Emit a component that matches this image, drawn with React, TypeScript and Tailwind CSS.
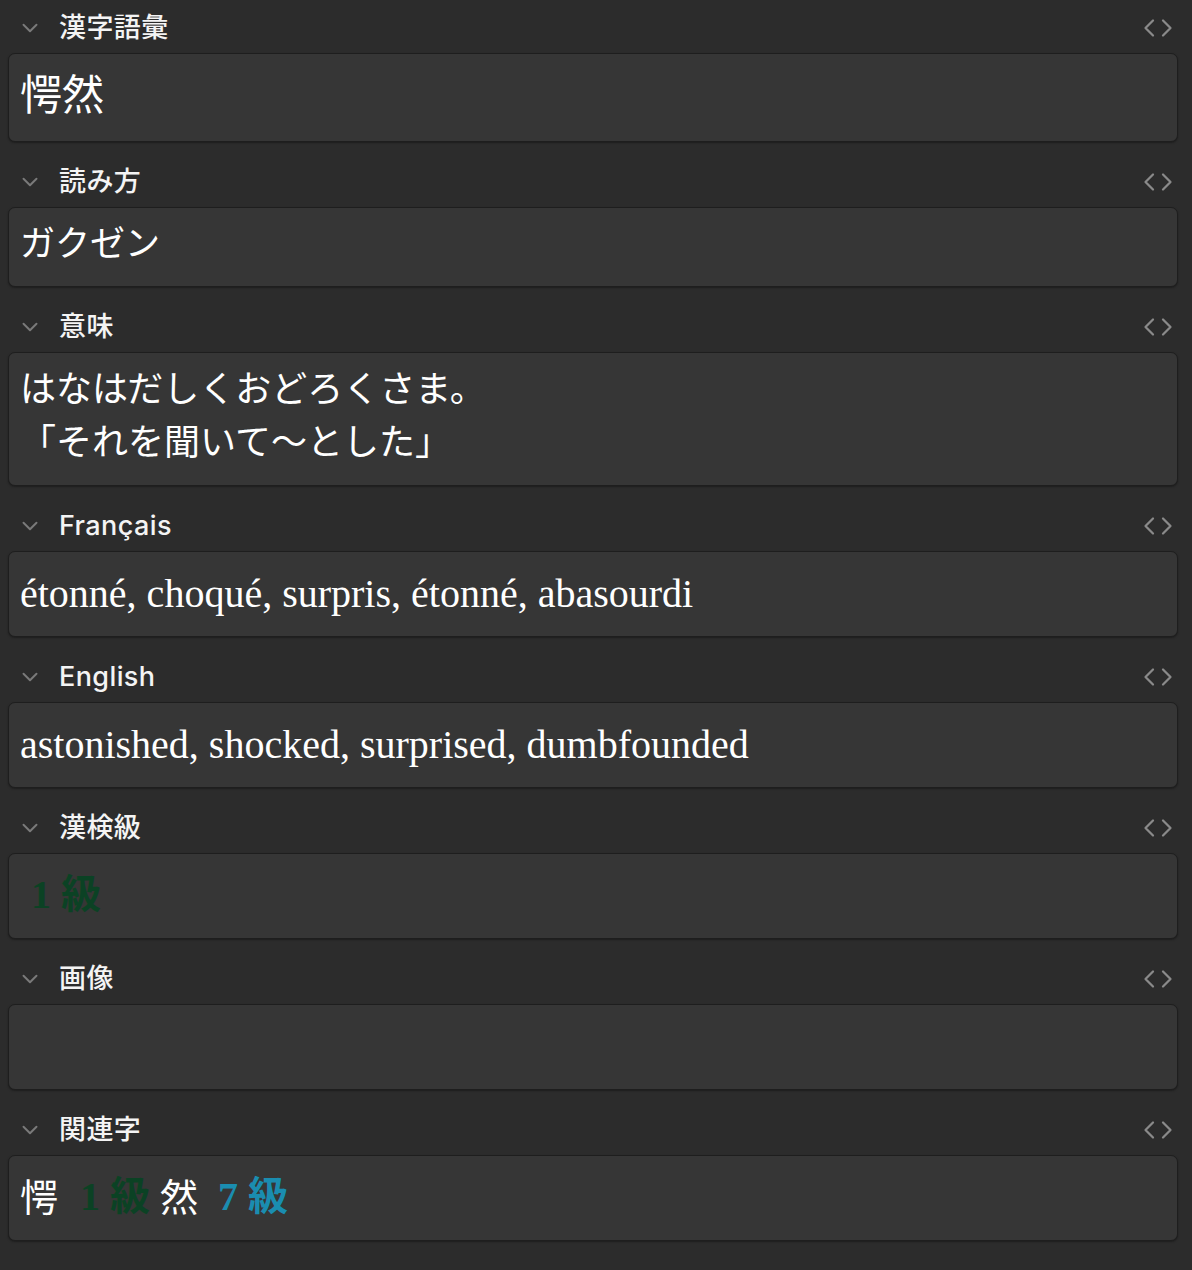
import React from "react";
import { ChevronDown, Code } from "lucide-react";

const sans = "font-['Inter','Noto_Sans_CJK_JP',sans-serif]";
const serif = "font-['Liberation_Serif','Noto_Sans_CJK_JP',serif]";

interface FieldProps {
    label: string;
    boxClass: string;
    children?: React.ReactNode;
}

const Field: React.FC<FieldProps> = ({ label, boxClass, children }) => (
    <div className="mb-[13px]">
        {/* Label row */}
        <div className="flex h-[52px] items-center pt-[2px]">
            <div className="flex w-[59px] justify-center">
                <ChevronDown size={26} strokeWidth={1.8} className="text-[#7a7a7a]" />
            </div>
            <span className={`${sans} flex-1 text-[27px] font-medium tracking-[0.4px] text-[#f4f4f4]`}>{label}</span>
            <Code size={30} strokeWidth={1.8} className="mr-[19px] text-[#8a8a8a]" />
        </div>

        {/* Editable box */}
        <div
            className={`ml-[8px] mr-[14px] rounded-[7px] border border-[#1e1e1e] bg-[#363636] px-[11px] text-white shadow-[0_1px_2px_rgba(0,0,0,0.35)] ${boxClass}`}
        >
            {children}
        </div>
    </div>
);

export default function App() {
    return (
        <div className="min-h-[1270px] w-[1192px] bg-[#2c2c2c] pt-[1px]">
            <Field label="漢字語彙" boxClass={`${sans} h-[89px] pt-[13px] text-[42px] leading-[55px]`}>
                愕然
            </Field>

            <Field label="読み方" boxClass={`${serif} h-[80px] pt-[12px] text-[35px] leading-[50px]`}>
                ガクゼン
            </Field>

            <Field label="意味" boxClass={`${serif} h-[134px] pt-[11px] text-[36px] leading-[53px]`}>
                はなはだしくおどろくさま。
                <br />
                「それを聞いて〜とした」
            </Field>

            <Field label="Français" boxClass={`${serif} h-[86px] pt-[17px] text-[40px] leading-[50px]`}>
                étonné, choqué, surpris, étonné, abasourdi
            </Field>

            <Field label="English" boxClass={`${serif} h-[86px] pt-[17px] text-[40px] leading-[50px]`}>
                astonished, shocked, surprised, dumbfounded
            </Field>

            <Field label="漢検級" boxClass={`${serif} h-[86px] pt-[16px] text-[40px] leading-[50px]`}>
                <span className="pl-[11px] font-bold text-[#0b4224]">1 級</span>
            </Field>

            <Field label="画像" boxClass="h-[86px]" />

            <Field label="関連字" boxClass={`${serif} flex h-[86px] items-start pt-[16px] text-[40px] leading-[50px]`}>
                <span className={`${sans} text-[38px]`}>愕</span>
                <span className="ml-[22px] font-bold text-[#0b4224]">1 級</span>
                <span className={`${sans} ml-[10px] text-[38px]`}>然</span>
                <span className="ml-[20px] font-bold text-[#1a8db0]">7 級</span>
            </Field>
        </div>
    );
}
